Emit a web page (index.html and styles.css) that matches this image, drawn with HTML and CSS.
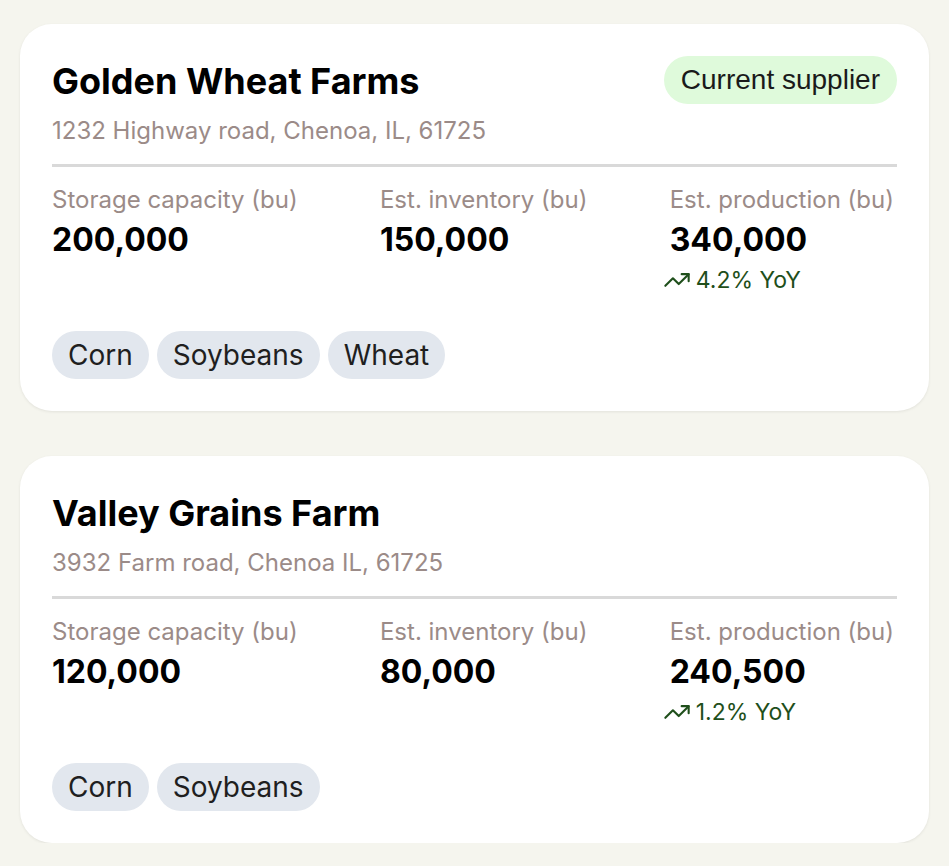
FILE: index.html
```html
<!DOCTYPE html>
<html>
<head>
<meta charset="utf-8">
<link rel="stylesheet" href="styles.css">
</head>
<body>
<div class="list">
  <section class="card">
    <div class="head">
      <h2 class="name">Golden Wheat Farms</h2>
      <span class="badge">Current supplier</span>
    </div>
    <p class="addr">1232 Highway road, Chenoa, IL, 61725</p>
    <div class="stats">
      <div class="stat">
        <div class="label">Storage capacity (bu)</div>
        <div class="value">200,000</div>
      </div>
      <div class="stat">
        <div class="label">Est. inventory (bu)</div>
        <div class="value">150,000</div>
      </div>
      <div class="stat">
        <div class="label">Est. production (bu)</div>
        <div class="value">340,000</div>
        <div class="trend"><svg viewBox="0 0 24 24" fill="none" stroke="currentColor" stroke-width="1.8" stroke-linecap="round" stroke-linejoin="round"><polyline points="22 7 13.5 15.5 8.5 10.5 2 17"/><polyline points="16 7 22 7 22 13"/></svg><span>4.2% YoY</span></div>
      </div>
    </div>
    <div class="tags">
      <span class="tag">Corn</span>
      <span class="tag">Soybeans</span>
      <span class="tag">Wheat</span>
    </div>
  </section>
  <section class="card">
    <div class="head">
      <h2 class="name">Valley Grains Farm</h2>
    </div>
    <p class="addr">3932 Farm road, Chenoa IL, 61725</p>
    <div class="stats">
      <div class="stat">
        <div class="label">Storage capacity (bu)</div>
        <div class="value">120,000</div>
      </div>
      <div class="stat">
        <div class="label">Est. inventory (bu)</div>
        <div class="value">80,000</div>
      </div>
      <div class="stat">
        <div class="label">Est. production (bu)</div>
        <div class="value">240,500</div>
        <div class="trend"><svg viewBox="0 0 24 24" fill="none" stroke="currentColor" stroke-width="1.8" stroke-linecap="round" stroke-linejoin="round"><polyline points="22 7 13.5 15.5 8.5 10.5 2 17"/><polyline points="16 7 22 7 22 13"/></svg><span>1.2% YoY</span></div>
      </div>
    </div>
    <div class="tags">
      <span class="tag">Corn</span>
      <span class="tag">Soybeans</span>
    </div>
  </section>
</div>
</body>
</html>
```
FILE: styles.css
```css
* { box-sizing: border-box; }
html, body { margin: 0; padding: 0; }
body {
  background: #f5f5ee;
  font-family: Inter, "Liberation Sans", sans-serif;
  color: #000;
}
.list {
  display: flex;
  flex-direction: column;
  gap: 45px;
  padding: 24px 20px 0 20px;
  width: 949px;
}
.card {
  background: #fff;
  border-radius: 32px;
  padding: 32px;
  box-shadow: 0 1px 3px rgba(0,0,0,0.08);
}
.head {
  display: flex;
  justify-content: space-between;
  align-items: center;
  height: 48px;
}
.name {
  margin: 0;
  font-size: 36px;
  font-weight: 700;
  line-height: 48px;
  position: relative;
  top: 1px;
}
.badge {
  font-family: "Liberation Sans", Arial, sans-serif;
  font-size: 28px;
  line-height: 32px;
  padding: 8px 17px;
  border-radius: 24px;
  background: #dffadb;
  color: #1a1a1a;
}
.addr {
  margin: 11px 0 0 0;
  font-size: 24px;
  line-height: 32px;
  color: #9b8b88;
}
.stats {
  margin-top: 17px;
  border-top: 3px solid #d9d9d9;
  padding: 17px 3px 0 0;
  display: flex;
  justify-content: space-between;
}
.label {
  font-size: 24px;
  line-height: 32px;
  color: #9b8b88;
}
.value {
  font-size: 32px;
  font-weight: 700;
  line-height: 40px;
  margin-top: 4px;
}
.trend {
  display: flex;
  align-items: center;
  gap: 5px;
  margin-left: -7px;
  margin-top: 5px;
  color: #1f4f1b;
  font-size: 23px;
  line-height: 30px;
}
.trend svg { width: 28px; height: 28px; flex: none; }
.tags {
  display: flex;
  gap: 8px;
  margin-top: 36px;
}
.tag {
  background: #e2e7ee;
  color: #1f1f1f;
  font-size: 28px;
  line-height: 32px;
  padding: 8px 16px;
  border-radius: 24px;
}
```
